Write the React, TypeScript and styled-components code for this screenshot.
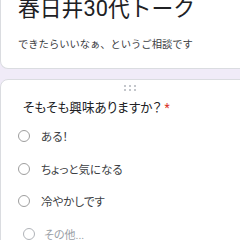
import styled, { createGlobalStyle } from "styled-components";

const GlobalStyle = createGlobalStyle`
  html, body {
    margin: 0;
    padding: 0;
    background: #f0ebf8;
    overflow: hidden;
  }
  body {
    font-family: "Roboto", "Noto Sans CJK JP", sans-serif;
    color: #202124;
  }
`;

const options = ["ある！", "ちょっと気になる", "冷やかしです"];

export default function App() {
  return (
    <>
      <GlobalStyle />
      <Page>
        <HeaderCard>
          <Title>春日井30代トーク</Title>
          <Description>できたらいいなぁ、というご相談です</Description>
        </HeaderCard>
        <QuestionCard>
          <DragHandle>
            <svg width="12" height="6" viewBox="0 0 12 6">
              {[0, 1].map((r) =>
                [0, 1, 2].map((c) => (
                  <rect
                    key={`${r}-${c}`}
                    x={c * 5}
                    y={r * 4}
                    width="2"
                    height="2"
                    fill="#c4c7cc"
                  />
                ))
              )}
            </svg>
          </DragHandle>
          <Question>
            そもそも興味ありますか？<Required>*</Required>
          </Question>
          <Options>
            {options.map((o) => (
              <Option key={o}>
                <Radio />
                <span>{o}</span>
              </Option>
            ))}
            <Option $other>
              <Radio $other />
              <span>その他...</span>
            </Option>
          </Options>
        </QuestionCard>
      </Page>
    </>
  );
}

const Page = styled.div`
  width: 260px;
  display: flex;
  flex-direction: column;
  gap: 10px;
`;

const Card = styled.div`
  background: #fff;
  border: 1px solid #dadce0;
  border-radius: 8px;
  box-sizing: border-box;
`;

const HeaderCard = styled(Card)`
  margin-top: -10px;
  height: 79px;
  padding: 5px 18px 0 17px;
  border-top: none;
`;

const Title = styled.div`
  font-size: 21.8px;
  line-height: 28px;
  font-weight: 400;
`;

const Description = styled.div`
  margin-top: 14px;
  font-size: 10.3px;
  line-height: 16px;
  color: #3c4043;
`;

const QuestionCard = styled(Card)`
  padding: 5px 18px 20px 22px;
  height: 200px;
`;

const DragHandle = styled.div`
  display: flex;
  justify-content: center;
  height: 8px;
  margin-left: -4px;
`;

const Question = styled.div`
  margin-top: 5px;
  font-size: 12.6px;
  line-height: 20px;
  font-feature-settings: "palt";
`;

const Required = styled.span`
  color: #d93025;
  margin-left: 3px;
  vertical-align: top;
  font-size: 12px;
`;

const Options = styled.div`
  margin-top: 8px;
  margin-left: -5px;
  display: flex;
  flex-direction: column;
  gap: 12.5px;
`;

const Option = styled.div<{ $other?: boolean }>`
  display: flex;
  align-items: center;
  height: 20px;
  gap: ${(p) => (p.$other ? "9px" : "11px")};
  padding-left: ${(p) => (p.$other ? "5px" : "0")};
  font-size: ${(p) => (p.$other ? "11px" : "11.5px")};
  color: ${(p) => (p.$other ? "#9aa0a6" : "#3c4043")};
  font-feature-settings: "palt";
`;

const Radio = styled.span<{ $other?: boolean }>`
  width: 12px;
  height: 12px;
  box-sizing: border-box;
  border-radius: 50%;
  border: 1.5px solid ${(p) => (p.$other ? "#b0b3b8" : "#9e9e9e")};
  flex-shrink: 0;
`;
